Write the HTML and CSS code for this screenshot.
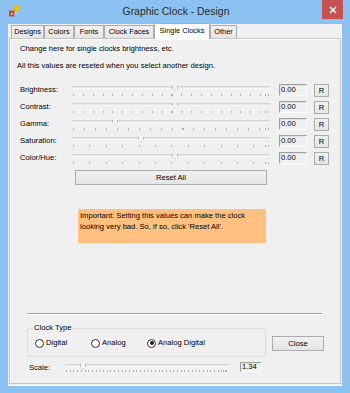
FILE: index.html
```html
<!DOCTYPE html>
<html>
<head>
<meta charset="utf-8">
<link rel="stylesheet" href="styles.css">
</head>
<body>
<div class="window">
  <div class="titlebar">
    <div class="tb-left">
      <svg class="app-icon" width="11" height="11" viewBox="0 0 11 11">
        <rect x="3" y="3" width="6" height="6" fill="#9cc9f0"/>
        <rect x="5" y="0" width="6" height="5" fill="#f2c21a" stroke="#d49a10" stroke-width="0.6"/>
        <rect x="0" y="5" width="5" height="5" fill="#e04a3a" stroke="#b83020" stroke-width="0.6"/>
        <rect x="2" y="7" width="1.5" height="1.5" fill="#fff"/>
      </svg>
    </div>
    <div class="title">Graphic Clock - Design</div>
    <div class="tb-right">
      <div class="close-x">
        <svg width="8" height="8" viewBox="0 0 8 8"><path d="M1 1 L7 7 M7 1 L1 7" stroke="#fff" stroke-width="1.6"/></svg>
      </div>
    </div>
  </div>
  <div class="client">
    <div class="tabs">
      <div class="tab w33">Designs</div>
      <div class="tab w30">Colors</div>
      <div class="tab w30">Fonts</div>
      <div class="tab w50">Clock Faces</div>
      <div class="tab sel w56">Single Clocks</div>
      <div class="tab w27">Other</div>
    </div>
    <div class="panel">
      <div class="intro1">Change here for single clocks brightness, etc.</div>
      <div class="intro2">All this values are reseted when you select another design.</div>

      <div class="sliders">
        <div class="srow">
          <div class="slabel">Brightness:</div>
          <div class="slider" style="--pos:100px; --tick:9.85px">
            <div class="track"></div><div class="thumb"></div><div class="ticks"></div>
          </div>
          <div class="valbox">0.00</div>
          <div class="rbtn">R</div>
        </div>
        <div class="srow">
          <div class="slabel">Contrast:</div>
          <div class="slider" style="--pos:100px; --tick:9.85px">
            <div class="track"></div><div class="thumb"></div><div class="ticks"></div>
          </div>
          <div class="valbox">0.00</div>
          <div class="rbtn">R</div>
        </div>
        <div class="srow">
          <div class="slabel">Gamma:</div>
          <div class="slider" style="--pos:40px; --tick:10.95px">
            <div class="track"></div><div class="thumb"></div><div class="ticks"></div>
          </div>
          <div class="valbox">0.00</div>
          <div class="rbtn">R</div>
        </div>
        <div class="srow">
          <div class="slabel">Saturation:</div>
          <div class="slider" style="--pos:66px; --tick:16.4px">
            <div class="track"></div><div class="thumb"></div><div class="ticks"></div>
          </div>
          <div class="valbox">0.00</div>
          <div class="rbtn">R</div>
        </div>
        <div class="srow">
          <div class="slabel">Color/Hue:</div>
          <div class="slider" style="--pos:100px; --tick:16.4px">
            <div class="track"></div><div class="thumb"></div><div class="ticks"></div>
          </div>
          <div class="valbox">0.00</div>
          <div class="rbtn">R</div>
        </div>
      </div>

      <div class="btn reset">Reset All</div>

      <div class="note">Important: Setting this values can make the clock looking very bad. So, if so, click 'Reset All'.</div>

      <div class="sep"></div>

      <div class="bottom">
        <div class="group">
          <span class="legend">Clock Type</span>
          <div class="radios">
            <label class="radio"><span class="circle"></span>Digital</label>
            <label class="radio"><span class="circle"></span>Analog</label>
            <label class="radio last"><span class="circle on"></span>Analog Digital</label>
          </div>
        </div>
        <div class="btn close">Close</div>
      </div>

      <div class="scale">
        <div class="scale-label">Scale:</div>
        <div class="slider small" style="--pos:15px; --tick:3.7px">
          <div class="track"></div><div class="thumb"></div><div class="ticks"></div>
        </div>
        <div class="valbox scalebox">1.34</div>
      </div>
    </div>
  </div>
</div>
</body>
</html>
```

FILE: styles.css
```css
* { box-sizing: border-box; }
html, body { margin: 0; padding: 0; }
body {
  width: 350px;
  height: 393px;
  overflow: hidden;
  background: #8cc2f2;
  font-family: "Liberation Sans", Arial, sans-serif;
  font-size: 7.6px;
  color: #000;
}
.window { width: 350px; height: 393px; }

.titlebar {
  height: 24px;
  display: grid;
  grid-template-columns: 1fr auto 1fr;
  align-items: start;
}
.tb-left { padding: 6px 0 0 9px; }
.app-icon { display: block; }
.title {
  font-size: 10.4px;
  line-height: 24px;
  color: #2a2a2a;
  padding-left: 2px;
}
.tb-right { display: flex; justify-content: flex-end; padding-right: 7px; }
.close-x {
  width: 21px;
  height: 19px;
  background: #c75050;
  display: flex;
  align-items: center;
  justify-content: center;
}
.close-x svg { display: block; }

.client {
  margin: 0 8px;
  height: 362px;
  background: #f0f0f0;
  display: flex;
  flex-direction: column;
  border-bottom: 1px solid #fafafa;
}

.tabs {
  height: 14px;
  display: flex;
  align-items: flex-end;
  padding-left: 3px;
  position: relative;
  z-index: 2;
}
.tab {
  height: 13px;
  border: 1px solid #acacac;
  border-bottom: none;
  background: linear-gradient(#f0f0f0, #e5e5e5);
  text-align: center;
  line-height: 12px;
  white-space: nowrap;
  font-size: 7.4px;
}
.tab.sel {
  height: 16px;
  background: #fff;
  margin-bottom: -1px;
  line-height: 13px;
}
.w33 { width: 33px; }
.w30 { width: 30px; }
.w50 { width: 50px; }
.w56 { width: 56px; }
.w27 { width: 27px; }

.panel {
  flex: 1;
  margin: 0 1px 1px 1px;
  border: 1px solid #c4c4c4;
  box-shadow: inset 1px 1px 0 #fdfdfd;
  display: flex;
  flex-direction: column;
  align-items: flex-start;
}

.intro1 { margin: 5px 0 0 10px; line-height: 10px; }
.intro2 { margin: 7px 0 0 7px; line-height: 10px; }

.sliders { margin-top: 13px; width: 100%; }
.srow {
  height: 17px;
  display: flex;
  align-items: flex-start;
}
.slabel {
  width: 62px;
  padding-left: 10px;
  line-height: 10px;
  padding-top: 1px;
}
.slider {
  position: relative;
  width: 198px;
  height: 13px;
}
.track {
  margin-top: 2px;
  height: 3px;
  background: #e6e6e6;
  border-top: 1px solid #d4d4d4;
  border-bottom: 1px solid #f7f7f7;
}
.thumb {
  position: absolute;
  left: var(--pos);
  top: 2px;
  width: 6px;
  height: 5px;
  background: #f4f4f4;
  border: 1px solid #b8b8b8;
  border-top: none;
  clip-path: polygon(0 0, 100% 0, 100% 45%, 50% 100%, 0 45%);
}
.ticks {
  margin: 5px 0 0 1px;
  height: 2px;
  width: calc(100% - 2px);
  background:
    linear-gradient(#b0b0b0, #b0b0b0) right 0 top 0 / 1px 2px no-repeat,
    linear-gradient(#b0b0b0, #b0b0b0) right 3px top 0 / 1px 2px no-repeat,
    repeating-linear-gradient(to right, #b0b0b0 0 1px, transparent 1px var(--tick));
}

.valbox {
  margin-left: 9px;
  width: 28px;
  height: 12px;
  background: #f0f0f0;
  border-top: 1px solid #a0a0a0;
  border-left: 1px solid #a0a0a0;
  border-right: 1px solid #fcfcfc;
  border-bottom: 1px solid #fcfcfc;
  box-shadow: inset 1px 1px 0 #e0e0e0;
  line-height: 10px;
  padding-left: 1px;
}
.rbtn {
  margin-left: 7px;
  width: 15px;
  height: 13px;
  border: 1px solid #acacac;
  background: linear-gradient(#f0f0f0, #e5e5e5);
  text-align: center;
  line-height: 11px;
}

.btn {
  border: 1px solid #acacac;
  background: linear-gradient(#f0f0f0, #e5e5e5);
  text-align: center;
}
.reset {
  margin: 1px 0 0 65px;
  width: 192px;
  height: 15px;
  line-height: 13px;
}

.note {
  margin: 24px 0 0 68px;
  width: 188px;
  height: 34px;
  background: #ffc080;
  padding: 2px 2px 0 2px;
  line-height: 10.5px;
}

.sep {
  margin: 70px 0 0 17px;
  width: 295px;
  height: 2px;
  border-top: 1px solid #a0a0a0;
  border-bottom: 1px solid #fff;
}

.bottom {
  display: flex;
  align-items: flex-start;
  margin: 13px 0 0 17px;
}
.group {
  position: relative;
  width: 239px;
  height: 29px;
  border: 1px solid #dcdcdc;
  border-radius: 2px;
}
.legend {
  position: absolute;
  left: 5px;
  top: -6px;
  padding: 0 1px;
  background: #f0f0f0;
  line-height: 10px;
}
.radios {
  display: flex;
  margin: 9px 0 0 7px;
}
.radio {
  display: flex;
  align-items: center;
  line-height: 10px;
  width: 56px;
  white-space: nowrap;
}
.radio.last { width: auto; }
.circle {
  flex: none;
  width: 9px;
  height: 9px;
  border: 1px solid #333;
  border-radius: 50%;
  background: #fff;
  margin-right: 2px;
  position: relative;
}
.circle.on::after {
  content: "";
  position: absolute;
  left: 1.5px;
  top: 1.5px;
  width: 4px;
  height: 4px;
  border-radius: 50%;
  background: #1a1a1a;
}
.close {
  margin: 8px 0 0 6px;
  width: 52px;
  height: 15px;
  line-height: 13px;
}

.scale {
  display: flex;
  align-items: flex-start;
  margin: 5px 0 0 19px;
}
.scale-label { width: 36px; line-height: 10px; padding-top: 1px; }
.slider.small { width: 163px; height: 11px; }
.slider.small .track { margin-top: 2px; }
.slider.small .ticks { margin-top: 3px; }
.scalebox {
  margin-left: 12px;
  width: 22px;
  height: 10px;
  line-height: 8px;
}
```
